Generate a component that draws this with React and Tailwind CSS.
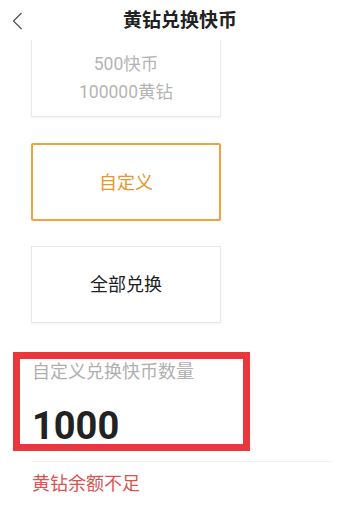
export default function App() {
  return (
    <div className="relative w-[360px] h-[530px] overflow-hidden bg-white font-['Roboto','Noto_Sans_CJK_SC',sans-serif]">
      <div className="relative z-10 flex h-10 items-center justify-center bg-white">
        <svg className="absolute left-[10px] top-[12px]" width="14" height="18" viewBox="0 0 14 18" fill="none">
          <path d="M11.5 1 L3.5 9 L11.5 17" stroke="#555" strokeWidth="1.3" />
        </svg>
        <h1 className="text-[19px] font-bold text-[#222] leading-none">黄钻兑换快币</h1>
      </div>

      <div className="flex flex-col">
        <div className="ml-[31px] flex h-[77px] w-[190px] flex-col items-center justify-center border border-t-0 border-[#ebebeb] shadow-[0_1px_2px_rgba(0,0,0,0.06)] text-[17.5px] leading-[28px] text-[#b5b5b5]">
          <span>500快币</span>
          <span>100000黄钻</span>
        </div>

        <div className="ml-[31px] mt-[26px] flex h-[78px] w-[190px] items-center justify-center rounded-[2px] border-2 border-[#f0a23c] text-[18px] text-[#e8962e]">
          自定义
        </div>

        <div className="ml-[31px] mt-[25px] flex h-[77px] w-[190px] items-center justify-center border border-[#e8e8e8] shadow-[0_1px_2px_rgba(0,0,0,0.05)] text-[18px] text-[#222]">
          全部兑换
        </div>

        <div className="ml-[13px] mt-[29px] flex h-[99px] w-[237px] flex-col border-[7px] border-[#e9373d] pl-3">
          <span className="text-[18px] leading-[26px] text-[#b0b0b0]">自定义兑换快币数量</span>
          <span className="mt-[22px] text-[38px] font-bold leading-none text-[#222]">1000</span>
        </div>

        <div className="ml-[32px] mt-[10px] h-px w-[300px] bg-[#f0f0f0]" />

        <span className="ml-[32px] mt-[10px] text-[18px] leading-6 text-[#d9544f]">黄钻余额不足</span>
      </div>
    </div>
  );
}
